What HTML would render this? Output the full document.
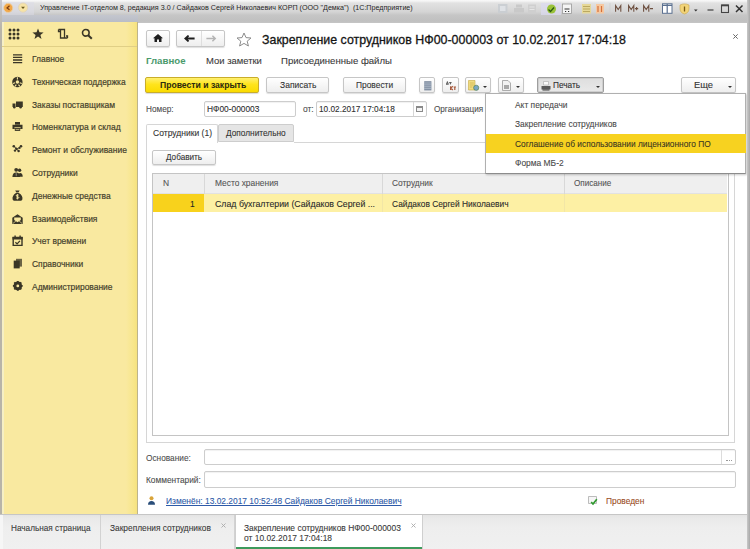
<!DOCTYPE html>
<html><head><meta charset="utf-8">
<style>
*{box-sizing:border-box;margin:0;padding:0}
html,body{width:750px;height:549px;overflow:hidden;background:#fff}
body{position:relative;font-family:"Liberation Sans",sans-serif;font-size:9px;color:#404040}
.a{position:absolute}
.t{position:absolute;white-space:nowrap;line-height:12px;-webkit-text-stroke:0.1px currentColor}
.btn{position:absolute;border:1px solid #c6c6c6;border-radius:2px;background:linear-gradient(#ffffff,#eeeeee);box-shadow:0 1px 1px rgba(0,0,0,.13)}
.inp{position:absolute;border:1px solid #cdcdcd;border-radius:2px;background:#fff;box-shadow:inset 0 1px 1px rgba(0,0,0,.06)}
.dd{position:absolute;width:0;height:0;border-left:2px solid transparent;border-right:2px solid transparent;border-top:2.5px solid #333}
</style></head><body>
<div class="a" style="left:0;top:0;width:750px;height:22.5px;background:linear-gradient(#fafafa 0,#f0f0f0 1.5px,#e2e2e2 3px,#dadada 8px,#d4d4d4 12px,#c6c6c6 15px,#c0c0c0 21px,#c4c4c4 22.5px)"></div>
<div class="a" style="left:0;top:2px;width:34px;height:13px;background:#dcdce8;opacity:.5"></div>
<div class="a" style="left:0;top:14.7px;width:138px;height:7.3px;background:linear-gradient(#c4c6ce,#b9bdc7)"></div>
<svg class="a" style="left:2px;top:2px" width="30" height="12" viewBox="0 0 30 12"><circle cx="6.2" cy="5.9" r="4.6" fill="#f2a848" stroke="#e9d2b0" stroke-width="0.8"/><path d="M7.5 3.8L5 6l2.5 1.8" stroke="#7a3a10" stroke-width="1.2" fill="none"/><circle cx="21" cy="5.6" r="4.6" fill="#f6e3a6" stroke="#e0d2b8" stroke-width="0.8"/><path d="M19 4.8h4l-2 2.2z" fill="#6a5a20"/></svg>
<div class="t" style="left:39.50px;top:2px;font-size:8px;color:#262626;transform:scaleX(0.8919);transform-origin:0 0;-webkit-text-stroke:0">Управление IT-отделом 8, редакция 3.0 / Сайдаков Сергей Николаевич КОРП (ООО "Демка")&nbsp; (1С:Предприятие)</div>
<svg class="a" style="left:495px;top:2px" width="255" height="14" viewBox="495 2 255 14">
<rect x="498" y="4" width="9.5" height="9" fill="#c9cdd2" opacity=".9"/><rect x="500" y="6" width="5.5" height="5" fill="#dfe2e6"/>
<path d="M514 8h10v4.5h-10z M516 4.5h6v3h-6z" fill="#c9c9c9"/>
<path d="M528 4.5h8v9h-8z" fill="#cfcfcf"/><path d="M529.5 7h5M529.5 9.5h5" stroke="#e6e6e6" stroke-width="1"/>
<rect x="541" y="3" width="20" height="12" fill="#dcdaf0" opacity=".7"/>
<circle cx="551.5" cy="9" r="4.5" fill="#9ac23a"/><path d="M548.5 9.5l2 2 3.5-4" stroke="#2a5a10" stroke-width="1.3" fill="none"/>
<rect x="562.5" y="4" width="9" height="9.5" fill="#f4f4f4" stroke="#9a9a9a" stroke-width="0.8"/><path d="M564.5 9h5M565 11.5h1.2M568 11.5h1.2" stroke="#333" stroke-width="1.1"/>
<rect x="582" y="4" width="9" height="9.5" fill="#e6d898"/><path d="M583 6.5h7M583 9h7M583 11.5h7" stroke="#b5a45a" stroke-width="0.9"/>
<rect x="596" y="4" width="8" height="9.5" fill="#f6c8a0"/><path d="M598 6v6M601.5 6v6" stroke="#d6703a" stroke-width="1.2"/>
<path d="M610 3v12" stroke="#cfcfcf" stroke-width="0.8"/>
<path d="M615.6 11.8V5.6l2.6 4l2.6-4v6.2" stroke="#6e5040" stroke-width="1.1" fill="none"/>
<path d="M628.6 11.8V5.6l2.6 4l2.6-4v6.2M635 8.6h3.2M636.6 7v3.2" stroke="#6e5040" stroke-width="1.1" fill="none"/>
<path d="M643.6 11.8V5.6l2.6 4l2.6-4v6.2M650 8.6h3" stroke="#6e5040" stroke-width="1.1" fill="none"/>
<rect x="662.5" y="3.8" width="9.5" height="9.5" fill="#fff" stroke="#5a7090" stroke-width="1"/><path d="M667.2 4v9M662.5 5.3h9.5" stroke="#5a7090" stroke-width="1.2"/>
<path d="M680 5c3-1.5 6-1.5 9 0v4c0 3-2.5 4.5-4.5 5c-2-.5-4.5-2-4.5-5z" fill="#f2d478" stroke="#c9a64a" stroke-width="0.6"/><path d="M684.5 6.5v5" stroke="#7a5a10" stroke-width="1.3"/>
<path d="M694 9.5h3.6l-1.8 2z" fill="#333"/>
<path d="M707.5 10h6" stroke="#555" stroke-width="1.4"/>
<rect x="721.5" y="5" width="7" height="7.5" fill="none" stroke="#444" stroke-width="1.1"/><path d="M721.5 5.5h7" stroke="#444" stroke-width="1.6"/>
<path d="M736 5.5l6.5 6.5M742.5 5.5L736 12" stroke="#333" stroke-width="1.5"/>
</svg>
<div class="a" style="left:0;top:0;width:2px;height:514px;background:linear-gradient(#c8c8d0,#b8b4a8 30px)"></div>
<div class="a" style="left:2px;top:22px;width:2px;height:492px;background:#f6efc4"></div>
<div class="a" style="left:4px;top:22px;width:133px;height:492px;background:#f9e9a0"></div>
<div class="a" style="left:126px;top:22px;width:11px;height:492px;background:linear-gradient(90deg,rgba(249,230,140,0),#f8e68a 70%,#f6e27e)"></div>
<div class="a" style="left:137px;top:22px;width:1px;height:492px;background:#bdb48c"></div>
<div class="a" style="left:2px;top:45.5px;width:135px;height:1px;background:#e0cf86"></div>
<svg class="a" style="left:8px;top:28px" width="12" height="12" viewBox="0 0 12 12"><g fill="#3a3626"><circle cx="2" cy="2" r="1.5"/><circle cx="6" cy="2" r="1.5"/><circle cx="10" cy="2" r="1.5"/><circle cx="2" cy="6" r="1.5"/><circle cx="6" cy="6" r="1.5"/><circle cx="10" cy="6" r="1.5"/><circle cx="2" cy="10" r="1.5"/><circle cx="6" cy="10" r="1.5"/><circle cx="10" cy="10" r="1.5"/></g></svg>
<svg class="a" style="left:32px;top:28px" width="12" height="12" viewBox="0 0 12 12"><path fill="#3a3626" d="M6 0.5L7.5 4.3L11.6 4.4L8.4 6.9L9.5 10.9L6 8.6L2.5 10.9L3.6 6.9L0.4 4.4L4.5 4.3Z"/></svg>
<svg class="a" style="left:57px;top:28px" width="12" height="12" viewBox="0 0 12 12"><path fill="none" stroke="#3a3626" stroke-width="1.3" d="M1.5 1.5h6v8.5M3.5 1.5v8.5h7M1.5 1.5v2h2M10.5 10v-2h-1.5"/></svg>
<svg class="a" style="left:81px;top:28px" width="12" height="12" viewBox="0 0 12 12"><circle cx="4.8" cy="4.8" r="3.3" fill="none" stroke="#3a3626" stroke-width="1.6"/><path d="M7.2 7.2L10.8 10.8" stroke="#3a3626" stroke-width="2"/></svg>
<svg class="a" style="left:12.2px;top:53.0px" width="12" height="12" viewBox="0 0 12 12"><path d="M1 1.8h9.2M1 4.4h9.2M1 7h9.2M1 9.6h9.2" stroke="#3a3626" stroke-width="1.35"/></svg>
<div class="t" style="left:32.20px;top:53px;font-size:9.8px;color:#433e2b;transform:scaleX(0.8620);transform-origin:0 0;-webkit-text-stroke:0.2px #433e2b">Главное</div>
<svg class="a" style="left:12.2px;top:75.8px" width="12" height="12" viewBox="0 0 12 12"><circle cx="5.4" cy="6" r="5.2" fill="#3a3626"/><circle cx="5.4" cy="6" r="1.7" fill="#f9e9a0"/><path d="M5.4 1.2v2.2M1 7.6l2.1-.8M9.8 7.6l-2.1-.8M3 10.4l1.3-1.8M7.8 10.4l-1.3-1.8" stroke="#f9e9a0" stroke-width="1.1"/></svg>
<div class="t" style="left:32.20px;top:76px;font-size:9.8px;color:#433e2b;transform:scaleX(0.8570);transform-origin:0 0;-webkit-text-stroke:0.2px #433e2b">Техническая поддержка</div>
<svg class="a" style="left:12.2px;top:98.6px" width="12" height="12" viewBox="0 0 12 12"><path fill="#3a3626" d="M4 2.6h6.8v5.4H4zM0.5 4.6h3v3.4h-3z"/><circle cx="2.3" cy="8.2" r="1.2" fill="#3a3626"/><circle cx="8.6" cy="8.2" r="1.2" fill="#3a3626"/></svg>
<div class="t" style="left:32.20px;top:99px;font-size:9.8px;color:#433e2b;transform:scaleX(0.8620);transform-origin:0 0;-webkit-text-stroke:0.2px #433e2b">Заказы поставщикам</div>
<svg class="a" style="left:12.2px;top:121.4px" width="12" height="12" viewBox="0 0 12 12"><path fill="#3a3626" d="M3 1h5v2.4H3zM0.5 3.8h10v4.2h-10z"/><path fill="#f9e9a0" d="M2.4 6.3h6.2v1H2.4z"/><path fill="#3a3626" d="M2.8 7.3h5.4v2.6H2.8z"/><path fill="#f9e9a0" d="M3.6 8.2h3.8v.6H3.6z"/></svg>
<div class="t" style="left:32.20px;top:121px;font-size:9.8px;color:#433e2b;transform:scaleX(0.8620);transform-origin:0 0;-webkit-text-stroke:0.2px #433e2b">Номенклатура и склад</div>
<svg class="a" style="left:12.2px;top:144.2px" width="12" height="12" viewBox="0 0 12 12"><circle cx="1.8" cy="2.2" r="1.3" fill="#3a3626"/><circle cx="4.2" cy="4.6" r="1.2" fill="#3a3626"/><circle cx="6.6" cy="7" r="1.2" fill="#3a3626"/><circle cx="9" cy="2.2" r="1.3" fill="#3a3626"/><circle cx="7.6" cy="4" r="1.1" fill="#3a3626"/><circle cx="3" cy="6.6" r="1.2" fill="#3a3626"/><path d="M1.8 2.2l5 5M9 2.2L3 6.6" stroke="#3a3626" stroke-width="1"/></svg>
<div class="t" style="left:32.20px;top:144px;font-size:9.8px;color:#433e2b;transform:scaleX(0.8620);transform-origin:0 0;-webkit-text-stroke:0.2px #433e2b">Ремонт и обслуживание</div>
<svg class="a" style="left:12.2px;top:167.0px" width="12" height="12" viewBox="0 0 12 12"><circle cx="4.2" cy="2.8" r="1.9" fill="#3a3626"/><circle cx="7.6" cy="3.3" r="1.7" fill="#3a3626"/><path fill="#3a3626" d="M0.4 10c0-3.3 1.6-4.6 3.8-4.6s3.8 1.3 3.8 4.6z"/><path fill="#3a3626" d="M6 9.8c0-2.8 1-3.9 2.3-3.9s2.4 1.1 2.4 3.9z"/><path fill="#9a9686" d="M3.6 6.2h1.2l-.3 3h-.6z"/></svg>
<div class="t" style="left:32.20px;top:167px;font-size:9.8px;color:#433e2b;transform:scaleX(0.8620);transform-origin:0 0;-webkit-text-stroke:0.2px #433e2b">Сотрудники</div>
<svg class="a" style="left:12.2px;top:189.8px" width="12" height="12" viewBox="0 0 12 12"><path fill="#3a3626" d="M3.2 0.4h4.4l-1.1 2.1H4.3zM4 2.9h2.8c3 1.6 4 4 3.6 6.3c-.3 1.1-1.2 1.6-2.4 1.6H3c-1.2 0-2.1-.5-2.4-1.6C.2 6.9 1.2 4.5 4 2.9z"/><path d="M6.7 5.2c-.6-.7-2.4-.7-2.4.5s2.5.6 2.5 1.8-2 1.1-2.6.4M5.4 4.2v5.2" stroke="#f9e9a0" stroke-width="1" fill="none"/></svg>
<div class="t" style="left:32.20px;top:190px;font-size:9.8px;color:#433e2b;transform:scaleX(0.8620);transform-origin:0 0;-webkit-text-stroke:0.2px #433e2b">Денежные средства</div>
<svg class="a" style="left:12.2px;top:212.6px" width="12" height="12" viewBox="0 0 12 12"><path fill="#3a3626" d="M0.3 4.8L5.5 1.2L10.7 4.8V11H0.3z"/><path fill="#f9e9a0" d="M2.2 4.4h6.6v2.6L5.5 9.2L2.2 7z"/><path d="M0.8 10.6l3.3-2.8M10.2 10.6L6.9 7.8" stroke="#f9e9a0" stroke-width="0.7"/></svg>
<div class="t" style="left:32.20px;top:213px;font-size:9.8px;color:#433e2b;transform:scaleX(0.8620);transform-origin:0 0;-webkit-text-stroke:0.2px #433e2b">Взаимодействия</div>
<svg class="a" style="left:12.2px;top:235.4px" width="12" height="12" viewBox="0 0 12 12"><path fill="none" stroke="#3a3626" stroke-width="1.4" d="M1.2 2.4h8.8v8H1.2z"/><path fill="#3a3626" d="M0.5 2h10.2v2.6H0.5zM2.4 0.6h1.4v2H2.4zM7.4 0.6h1.4v2H7.4z"/><path d="M3.4 7.3l1.7 1.6 2.8-3" stroke="#3a3626" stroke-width="1.3" fill="none"/></svg>
<div class="t" style="left:32.20px;top:235px;font-size:9.8px;color:#433e2b;transform:scaleX(0.8620);transform-origin:0 0;-webkit-text-stroke:0.2px #433e2b">Учет времени</div>
<svg class="a" style="left:12.2px;top:258.2px" width="12" height="12" viewBox="0 0 12 12"><path fill="#3a3626" opacity="0.75" d="M4 0.8h6v7.8H4z"/><path fill="#3a3626" d="M1.7 2.6h6v7.8h-6z"/></svg>
<div class="t" style="left:32.20px;top:258px;font-size:9.8px;color:#433e2b;transform:scaleX(0.8620);transform-origin:0 0;-webkit-text-stroke:0.2px #433e2b">Справочники</div>
<svg class="a" style="left:12.2px;top:281.0px" width="12" height="12" viewBox="0 0 12 12"><circle cx="5.8" cy="4.9" r="3.2" fill="none" stroke="#3a3626" stroke-width="2.2"/><path stroke="#3a3626" stroke-width="1.9" d="M5.8 0v9.8M0.9 4.9h9.8M2.3 1.4l7 7M9.3 1.4l-7 7"/><circle cx="5.8" cy="4.9" r="1.4" fill="#f9e9a0"/></svg>
<div class="t" style="left:32.20px;top:281px;font-size:9.8px;color:#433e2b;transform:scaleX(0.8620);transform-origin:0 0;-webkit-text-stroke:0.2px #433e2b">Администрирование</div>
<div class="btn" style="left:145.5px;top:30px;width:24.5px;height:16.5px"></div>
<svg class="a" style="left:152.6px;top:33.8px" width="10" height="8" viewBox="0 0 10 8"><path fill="#1e1e1e" d="M5 0L10 4.3H8.5V8H6V5.6H4V8H1.5V4.3H0z"/></svg>
<div class="btn" style="left:176.3px;top:30px;width:48.5px;height:16.5px"></div>
<div class="a" style="left:200.5px;top:31px;width:1px;height:14.5px;background:#dedede"></div>
<svg class="a" style="left:183.5px;top:34.5px" width="11" height="7" viewBox="0 0 11 7"><path d="M1.6 3.5h9M4.6 0.6L1.4 3.5l3.2 2.9" stroke="#1e1e1e" stroke-width="1.9" fill="none"/></svg>
<svg class="a" style="left:206px;top:34.5px" width="11" height="7" viewBox="0 0 11 7"><path d="M0.4 3.5h9M6.4 0.8l2.8 2.7-2.8 2.7" stroke="#b4b4b4" stroke-width="1.5" fill="none"/></svg>
<svg class="a" style="left:236px;top:32px" width="16" height="15" viewBox="0 0 16 15"><path fill="none" stroke="#8c8c8c" stroke-width="1" d="M8 1L10 5.6L15 6L11.2 9.2L12.4 14L8 11.4L3.6 14L4.8 9.2L1 6L6 5.6Z"/></svg>
<div class="t" style="left:262.30px;top:34px;font-size:13.3px;color:#141414;transform:scaleX(0.9327);transform-origin:0 0;-webkit-text-stroke:0.3px #141414">Закрепление сотрудников НФ00-000003 от 10.02.2017 17:04:18</div>
<svg class="a" style="left:733px;top:34px" width="5" height="5" viewBox="0 0 5 5"><path d="M0.3 0.3l4.4 4.4M4.7 0.3l-4.4 4.4" stroke="#6a6a6a" stroke-width="1"/></svg>
<div class="t" style="left:146.00px;top:55px;font-size:9.9px;color:#4a9a6c;transform:scaleX(0.9771);transform-origin:0 0;font-weight:700;-webkit-text-stroke:0">Главное</div>
<div class="t" style="left:205.90px;top:55px;font-size:9.9px;color:#3a3a3a;transform:scaleX(0.9568);transform-origin:0 0">Мои заметки</div>
<div class="t" style="left:281.20px;top:55px;font-size:9.9px;color:#3a3a3a;transform:scaleX(0.9696);transform-origin:0 0">Присоединенные файлы</div>
<div class="a" style="left:145.3px;top:77.3px;width:114px;height:16.1px;border:1px solid #c9ad2a;border-radius:2px;background:linear-gradient(#fff070,#ffe41c 45%,#fadb00);box-shadow:0 1px 1px rgba(0,0,0,.15)"></div>
<div class="t" style="left:159.60px;top:79px;font-size:9.2px;color:#2b2a10;transform:scaleX(0.9366);transform-origin:0 0;font-weight:700;-webkit-text-stroke:0">Провести и закрыть</div>
<div class="btn" style="left:265.6px;top:77.3px;width:63.1px;height:16.1px"></div>
<div class="t" style="left:279.60px;top:79px;font-size:9.8px;color:#333;transform:scaleX(0.8692);transform-origin:0 0">Записать</div>
<div class="btn" style="left:342.5px;top:77.3px;width:63.5px;height:16.1px"></div>
<div class="t" style="left:355.50px;top:79px;font-size:9.8px;color:#333;transform:scaleX(0.8561);transform-origin:0 0">Провести</div>
<div class="btn" style="left:419.3px;top:77.3px;width:16px;height:16px"></div>
<svg class="a" style="left:423.8px;top:80.5px" width="8" height="10" viewBox="0 0 8 10"><path fill="#7a889c" d="M0.2 0.2h7.2v9.2H0.2z"/><path stroke="#c8d2de" stroke-width="0.7" d="M0.2 2h7.2M0.2 3.9h7.2M0.2 5.8h7.2M0.2 7.7h7.2"/></svg>
<div class="btn" style="left:441.6px;top:77.3px;width:17px;height:16px"></div>
<svg class="a" style="left:444.5px;top:80px" width="12" height="11" viewBox="0 0 12 11"><path stroke="#555" stroke-width="1" fill="none" d="M1 4.2h2.6M1.6 4.2l.8-2.6l.8 2.6M4.2 2.6h2.4M5.4 2.6v1.8"/><path stroke="#a85a3c" stroke-width="1.2" fill="none" d="M5.6 6.2v3.8M5.8 8.1l2-1.9M5.8 8.1l2 1.9M8.6 7h2.4M9.8 7v3"/></svg>
<div class="btn" style="left:464.7px;top:77.3px;width:26px;height:16px"></div>
<svg class="a" style="left:468px;top:80px" width="12" height="11" viewBox="0 0 12 11"><path fill="#f0dc80" stroke="#c8aa40" stroke-width="0.6" d="M0.5 0.5h6.5v9.5H0.5z"/><path stroke="#c8aa40" stroke-width="0.6" d="M1.8 3h4M1.8 5h4M1.8 7h2.5"/><circle cx="8.2" cy="7.8" r="2.6" fill="#7aa6c6" stroke="#4c7a3a" stroke-width="0.6"/></svg>
<div class="dd" style="left:483px;top:85.5px"></div>
<div class="btn" style="left:497.7px;top:77.3px;width:26px;height:16px"></div>
<svg class="a" style="left:501.5px;top:80px" width="9" height="11" viewBox="0 0 9 11"><path fill="#f2f2f2" stroke="#9a9a9a" stroke-width="0.8" d="M0.5 0.5h5.5l2.5 2.5v7.5H0.5z"/><path fill="#a8a8a8" d="M2 5h5v4H2z"/></svg>
<div class="dd" style="left:515.5px;top:85.5px"></div>
<div class="a" style="left:537px;top:77.1px;width:67px;height:16.2px;border:1px solid #9e9e9e;border-radius:2px;background:linear-gradient(#dedede,#e9e9e9);box-shadow:inset 0 0 0 1px #cfcfcf"></div>
<svg class="a" style="left:541px;top:80.5px" width="10" height="10" viewBox="0 0 10 10"><path fill="#fafafa" stroke="#aaa" stroke-width="0.6" d="M2.5 0.5h5v3.5h-5z"/><path fill="#5a5a5a" d="M0.5 5h9v3.5h-9z"/><path fill="#3a3a3a" d="M1.5 8.5h7v1h-7z"/></svg>
<div class="t" style="left:553.00px;top:79px;font-size:9.8px;color:#2e2e2e;transform:scaleX(0.8440);transform-origin:0 0">Печать</div>
<div class="dd" style="left:596px;top:85.5px"></div>
<div class="btn" style="left:681px;top:77px;width:54.7px;height:16.3px"></div>
<div class="t" style="left:694.20px;top:79px;font-size:9.8px;color:#333;transform:scaleX(0.9568);transform-origin:0 0">Еще</div>
<div class="dd" style="left:728px;top:85.5px"></div>
<div class="t" style="left:146.00px;top:103px;font-size:9.8px;color:#4e4e4e;transform:scaleX(0.8397);transform-origin:0 0">Номер:</div>
<div class="inp" style="left:204px;top:101.2px;width:91.5px;height:15.6px"></div>
<div class="t" style="left:206.50px;top:103px;font-size:9.8px;color:#2e2e2e;transform:scaleX(0.8543);transform-origin:0 0">НФ00-000003</div>
<div class="t" style="left:302.70px;top:103px;font-size:9.8px;color:#4e4e4e;transform:scaleX(0.8600);transform-origin:0 0">от:</div>
<div class="inp" style="left:316px;top:101.2px;width:111px;height:15.6px"></div>
<div class="a" style="left:412.7px;top:102px;width:1px;height:14px;background:#d6d6d6"></div>
<div class="a" style="left:416px;top:105.5px;width:7px;height:6px;border:1px solid #8a8a8a;border-top-width:2px;background:#f4f4f4"></div>
<div class="t" style="left:319.30px;top:103px;font-size:9.8px;color:#2e2e2e;transform:scaleX(0.8425);transform-origin:0 0">10.02.2017 17:04:18</div>
<div class="t" style="left:434.00px;top:103px;font-size:9.8px;color:#4e4e4e;transform:scaleX(0.8319);transform-origin:0 0">Организация</div>
<div class="a" style="left:146px;top:142px;width:589px;height:301.3px;border:1px solid #d6d6d6;border-top:none"></div>
<div class="a" style="left:294px;top:142px;width:441px;height:1px;background:#d6d6d6"></div>
<div class="a" style="left:146px;top:123.5px;width:72px;height:19.5px;border:1px solid #d6d6d6;border-bottom:none;border-radius:2px 2px 0 0;background:#fff"></div>
<div class="a" style="left:218px;top:124.4px;width:76px;height:17.8px;border:1px solid #cdcdcd;border-radius:2px 2px 0 0;background:#e5e5e5"></div>
<div class="t" style="left:153.40px;top:127px;font-size:9.8px;color:#333;transform:scaleX(0.8711);transform-origin:0 0">Сотрудники (1)</div>
<div class="t" style="left:225.80px;top:127px;font-size:9.8px;color:#333;transform:scaleX(0.8471);transform-origin:0 0">Дополнительно</div>
<div class="btn" style="left:152.4px;top:149.5px;width:63.6px;height:15.8px"></div>
<div class="t" style="left:165.60px;top:151px;font-size:9.8px;color:#333;transform:scaleX(0.8335);transform-origin:0 0">Добавить</div>
<div class="a" style="left:152.4px;top:173.3px;width:576.6px;height:262.7px;border:1px solid #c4c4c4;border-width:1px 1.5px 1.5px 1px;background:#fff"></div>
<div class="a" style="left:153.4px;top:174.3px;width:574px;height:19.4px;background:#efefef;border-bottom:1px solid #e2e2e2"></div>
<div class="a" style="left:204.1px;top:174.3px;width:1px;height:19.4px;background:#d8d8d8"></div>
<div class="a" style="left:381.6px;top:174.3px;width:1px;height:19.4px;background:#d8d8d8"></div>
<div class="a" style="left:563.6px;top:174.3px;width:1px;height:19.4px;background:#d8d8d8"></div>
<div class="t" style="left:163.20px;top:177px;font-size:9.8px;color:#555;transform:scaleX(0.8600);transform-origin:0 0">N</div>
<div class="t" style="left:215.30px;top:177px;font-size:9.8px;color:#555;transform:scaleX(0.8561);transform-origin:0 0">Место хранения</div>
<div class="t" style="left:391.90px;top:177px;font-size:9.8px;color:#555;transform:scaleX(0.8550);transform-origin:0 0">Сотрудник</div>
<div class="t" style="left:574.20px;top:177px;font-size:9.8px;color:#555;transform:scaleX(0.8284);transform-origin:0 0">Описание</div>
<div class="a" style="left:153.4px;top:194px;width:574px;height:18px;background:#fdf0a4"></div>
<div class="a" style="left:153.4px;top:194px;width:50.7px;height:18px;background:#f8d21c"></div>
<div class="a" style="left:381.6px;top:194px;width:1px;height:18px;background:#f2e6a6"></div>
<div class="a" style="left:563.6px;top:194px;width:1px;height:18px;background:#f2e6a6"></div>
<div class="t" style="left:190.20px;top:198px;font-size:9.8px;color:#222;transform:scaleX(0.8600);transform-origin:0 0">1</div>
<div class="t" style="left:215.30px;top:198px;font-size:9.8px;color:#2a2a2a;transform:scaleX(0.8952);transform-origin:0 0">Слад бухгалтерии (Сайдаков Сергей ...</div>
<div class="t" style="left:391.90px;top:198px;font-size:9.8px;color:#2a2a2a;transform:scaleX(0.8536);transform-origin:0 0">Сайдаков Сергей Николаевич</div>
<div class="a" style="left:485px;top:93.3px;width:261px;height:80.6px;background:#fff;border:1px solid #b0b0b0;border-bottom:1.6px solid #8c8c8c;box-shadow:1px 1px 2px rgba(0,0,0,.22)"></div>
<div class="a" style="left:486px;top:134px;width:260px;height:18.5px;background:#f7d220"></div>
<div class="t" style="left:514.60px;top:99px;font-size:9.8px;color:#4a4a4a;transform:scaleX(0.8600);transform-origin:0 0">Акт передачи</div>
<div class="t" style="left:514.60px;top:118px;font-size:9.8px;color:#4a4a4a;transform:scaleX(0.8600);transform-origin:0 0">Закрепление сотрудников</div>
<div class="t" style="left:514.60px;top:138px;font-size:9.8px;color:#3a3520;transform:scaleX(0.8515);transform-origin:0 0">Соглашение об использовании лицензионного ПО</div>
<div class="t" style="left:514.60px;top:157px;font-size:9.8px;color:#4a4a4a;transform:scaleX(0.8600);transform-origin:0 0">Форма МБ-2</div>
<div class="t" style="left:145.80px;top:452px;font-size:9.8px;color:#4e4e4e;transform:scaleX(0.8459);transform-origin:0 0">Основание:</div>
<div class="inp" style="left:204.3px;top:449.4px;width:531.3px;height:16px"></div>
<div class="a" style="left:721.4px;top:450.4px;width:1px;height:14px;background:#dcdcdc"></div>
<div class="a" style="left:725.5px;top:460px;width:6px;height:1px;border-top:1px dotted #999"></div>
<div class="t" style="left:145.80px;top:474px;font-size:9.8px;color:#4e4e4e;transform:scaleX(0.8508);transform-origin:0 0">Комментарий:</div>
<div class="inp" style="left:204.3px;top:471.4px;width:531.3px;height:16.2px"></div>
<svg class="a" style="left:147.8px;top:495.5px" width="7" height="9" viewBox="0 0 7 9"><circle cx="3.5" cy="2.2" r="2" fill="#d9a43a"/><path fill="#2a4e7a" d="M0 8.8c0-2.6 1.4-3.8 3.5-3.8S7 6.2 7 8.8z"/></svg>
<div class="t" style="left:166.00px;top:495px;font-size:9.8px;color:#2d5aa8;transform:scaleX(0.8578);transform-origin:0 0;text-decoration:underline">Изменён: 13.02.2017 10:52:48 Сайдаков Сергей Николаевич</div>
<svg class="a" style="left:587.8px;top:495.5px" width="10" height="10" viewBox="0 0 10 10"><path fill="#f6f6f6" stroke="#a0a0a0" stroke-width="0.7" d="M0.5 0.5h8v7h-8z"/><path d="M3.2 6l1.8 2 3.8-4.8" stroke="#2f9a2f" stroke-width="1.7" fill="none"/></svg>
<div class="t" style="left:605.60px;top:495px;font-size:9.8px;color:#9a4c24;transform:scaleX(0.8553);transform-origin:0 0">Проведен</div>
<div class="a" style="left:0;top:513.5px;width:750px;height:35.5px;background:linear-gradient(#e4e4e4 0,#e9e9e9 3px,#eeeeee 12px,#f0f0f0 35px);border-top:1.5px solid #c6c6c6"></div>
<div class="a" style="left:0;top:515px;width:3px;height:34px;background:#f6f6f6"></div>
<div class="a" style="left:99.5px;top:515px;width:1px;height:34px;background:#d2d2d2"></div>
<div class="t" style="left:11.30px;top:522px;font-size:9.8px;color:#3a3a3a;transform:scaleX(0.8391);transform-origin:0 0">Начальная страница</div>
<div class="a" style="left:234px;top:515px;width:1px;height:34px;background:#d2d2d2"></div>
<div class="t" style="left:110.00px;top:522px;font-size:9.8px;color:#3a3a3a;transform:scaleX(0.8533);transform-origin:0 0">Закрепления сотрудников</div>
<svg class="a" style="left:221px;top:522.5px" width="5" height="5" viewBox="0 0 5 5"><path d="M0.5 0.5l4 4M4.5 0.5l-4 4" stroke="#aaa" stroke-width="0.9"/></svg>
<div class="a" style="left:234.7px;top:515px;width:188.8px;height:34px;background:#fff;border-left:1px solid #cfcfcf;border-right:1px solid #cfcfcf"></div>
<div class="a" style="left:235.7px;top:547px;width:186.8px;height:2px;background:#3d9a5c"></div>
<div class="t" style="left:244.00px;top:522px;font-size:9.8px;color:#3a3a3a;transform:scaleX(0.8600);transform-origin:0 0">Закрепление сотрудников НФ00-000003</div>
<div class="t" style="left:244.00px;top:532px;font-size:9.8px;color:#3a3a3a;transform:scaleX(0.8600);transform-origin:0 0">от 10.02.2017 17:04:18</div>
<svg class="a" style="left:410.5px;top:522.5px" width="5" height="5" viewBox="0 0 5 5"><path d="M0.5 0.5l4 4M4.5 0.5l-4 4" stroke="#aaa" stroke-width="0.9"/></svg>
<div class="a" style="left:746.5px;top:0;width:3.5px;height:549px;background:linear-gradient(90deg,#c8c8c8,#a8a8a8)"></div>
</body></html>
